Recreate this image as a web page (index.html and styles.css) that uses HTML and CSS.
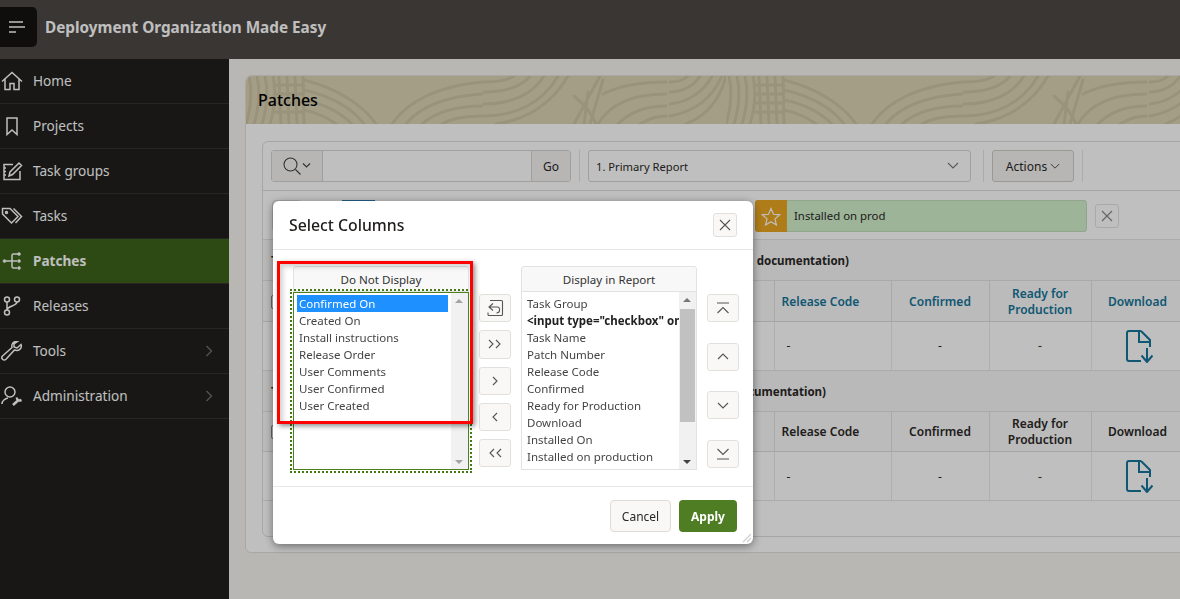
FILE: index.html
```html
<!DOCTYPE html>
<html lang="en">
<head>
	<meta charset="UTF-8">
	<title>Deployment Organization Made Easy</title>
	<link rel="stylesheet" href="styles.css">
</head>
<body>
	<header class="topbar">
		<button class="nav-toggle">
			<svg width="16" height="12" viewBox="0 0 16 12"><path d="M0 1h14M0 6h16M0 11h7" stroke="#fff" stroke-width="1.5"/></svg>
		</button>
		<div class="app-title">Deployment Organization Made Easy</div>
	</header>

	<div class="page">
		<nav class="sidebar">
			<ul>
				<li>
					<svg class="nav-ico" viewBox="0 0 22 20"><path d="M1 10.5L11 1.5l10 9M4 8v10.5h5v-6h4v6h5V8"/></svg>
					Home
				</li>
				<li>
					<svg class="nav-ico" viewBox="0 0 22 20"><path d="M6 2h10v16.5l-5-4.5-5 4.5z"/></svg>
					Projects
				</li>
				<li>
					<svg class="nav-ico" viewBox="0 0 22 20"><path d="M12 3.500H3V18.500H19V10M3 7h2M3 10.500h2M3 14h2M8 15l1-4 9-9 2.500 2.500-9 9z"/></svg>
					Task groups
				</li>
				<li>
					<svg class="nav-ico" viewBox="0 0 22 20"><path d="M1.5 2.500h7.500l8 8-6.500 6.500-9-9zM12.500 2.500l8 8-6 6.500"/><circle cx="5.5" cy="6.5" r="1"/></svg>
					Tasks
				</li>
				<li class="active">
					<svg class="nav-ico" viewBox="0 0 22 20"><path d="M5 10h6M19 3h-6.500a1.500 1.500 0 0 0-1.500 1.500v11a1.500 1.500 0 0 0 1.500 1.500H16M11 10h5"/><circle class="dot" cx="3.5" cy="10" r="1.5"/><circle class="dot" cx="18" cy="3" r="1.5"/><circle class="dot" cx="18" cy="10" r="1.5"/><circle class="dot" cx="18" cy="17" r="1.5"/></svg>
					Patches
				</li>
				<li>
					<svg class="nav-ico" viewBox="0 0 22 20"><circle cx="6" cy="3.5" r="2.5"/><circle cx="16" cy="3.5" r="2.5"/><circle cx="6" cy="16.5" r="2.5"/><path d="M6 6v8M16 6c0 4-10 4-10 8"/></svg>
					Releases
				</li>
				<li>
					<svg class="nav-ico" viewBox="0 0 22 20"><path d="M20 3.500l-4 3.500-3-1V3l3.500-2.500C13 0 10 2.500 11 6.500L1.500 15c-1 1-1 2.200 0 3.200s2.500 1 3.500 0L13.500 9c4 1.500 8-1.500 6.500-5.500z"/></svg>
					Tools
					<svg class="nav-more" viewBox="0 0 8 12"><path d="M1.5 1l5 5-5 5"/></svg>
				</li>
				<li>
					<svg class="nav-ico" viewBox="0 0 22 20"><circle cx="9" cy="6" r="5"/><path d="M1 18c0-3 3-5.500 6-6"/><path class="heavy" d="M12 19l5.500-5M16 11.500c-.5 2 1 4 4.500 2.500"/></svg>
					Administration
					<svg class="nav-more" viewBox="0 0 8 12"><path d="M1.5 1l5 5-5 5"/></svg>
				</li>
			</ul>
		</nav>

		<main class="content">
			<section class="card">
				<div class="card-head">
					<svg class="wood" width="100%" height="48">
						<defs>
							<pattern id="woodTile" width="480" height="48" patternUnits="userSpaceOnUse">
								<g fill="none" stroke="#cdc4a6" stroke-width="3" stroke-linecap="round">
									<path d="M3 0c3 14 2 32-3 48M11 0c3 14 2 32-3 48M19 0c3 14 2 32-3 48M27 0c3 14 2 32-3 48"/>
									<path d="M33 1l2 47M41 1l2 47M49 1l2 47M57 1l1 47M31 9h27M30 18h28M30 27h28M30 36h28"/>
									<path d="M58 4c32 8 58 24 72 44M58 14c26 6 48 18 60 34M58 24c20 4 36 12 48 24M58 34c14 3 24 8 32 14"/>
									<path d="M146 48c18-26 50-38 90-42M160 48c14-18 42-28 76-30M176 48c14-12 34-18 60-18M196 48c10-6 24-8 40-8"/>
									<path d="M238 6c14 0 24-2 30-6M238 16c18 0 36-4 46-16M238 28c24 0 48-8 60-28M238 40c30 0 58-12 74-40M250 48c30-4 56-20 72-48"/>
									<path d="M328 48l26-48M338 48l4-32M344 48l13-44M328 20c10 8 18 18 22 28"/>
									<path d="M357 18c16-8 38-12 63-12M352 48c12-20 36-30 68-30M372 48c12-12 28-18 48-18M394 48c8-5 16-8 26-8"/>
									<path d="M424 6c8 0 14-2 18-6M424 16c12 0 24-6 30-16M424 28c18-2 34-12 42-28M424 40c24-4 42-18 52-40M440 48c20-8 34-24 40-48"/>
								</g>
							</pattern>
						</defs>
						<rect width="100%" height="48" fill="url(#woodTile)"/>
					</svg>
					<h2>Patches</h2>
				</div>

				<div class="card-body">
					<div class="report">
						<div class="toolbar">
							<div class="search">
								<span class="search-ico">
									<svg width="28" height="18" viewBox="0 0 28 18"><circle cx="7.5" cy="7.5" r="6.5"/><path d="M12.500 12.500l5 5M20 6.500l3.500 3.500 3.500-3.500"/></svg>
								</span>
								<span class="search-field"></span>
								<span class="search-go">Go</span>
							</div>
							<span class="tb-sep"></span>
							<div class="report-select">
								1. Primary Report
								<svg width="12" height="8" viewBox="0 0 12 8"><path d="M1 1l5 5 5-5"/></svg>
							</div>
							<span class="tb-sep wide"></span>
							<div class="actions">
								Actions
								<svg width="10" height="7" viewBox="0 0 12 8"><path d="M1 1l5 5 5-5"/></svg>
							</div>
							<span class="tb-sep"></span>
						</div>

						<div class="filters">
							<span class="chip-plain"></span>
							<span class="chip-blue"></span>
							<div class="highlight">
								<span class="highlight-ico">
									<svg width="20" height="19" viewBox="0 0 20 19"><path d="M10 1.500l2.500 5.800 6.200.5-4.700 4.100 1.400 6.100L10 14.800l-5.400 3.200L6 11.900 1.300 7.800l6.200-.5z"/></svg>
								</span>
								<span class="highlight-text">Installed on prod</span>
							</div>
							<span class="filter-close">
								<svg width="12" height="12" viewBox="0 0 12 12"><path d="M1 1l10 10M11 1L1 11"/></svg>
							</span>
						</div>

						<div class="group-head"><div class="group-title group-first">Task group patches (see the installer documentation)</div></div>
						<table class="grid linked">
							<colgroup><col class="c1"><col class="c2"><col class="c3"><col class="c4"><col class="c5"><col class="c6"><col class="c7"></colgroup>
							<tr>
								<th><span class="check-box"></span></th><th>Task Name</th><th>Patch Number</th>
								<th class="start">Release Code</th><th>Confirmed</th><th>Ready for<br>Production</th><th>Download</th>
							</tr>
							<tr>
								<td></td><td>-</td><td>-</td><td class="start">-</td><td>-</td><td>-</td>
								<td><svg class="dl-ico" width="28" height="33" viewBox="0 0 28 33"><path d="M15 1H3a2 2 0 0 0-2 2v26a2 2 0 0 0 2 2h12M15 1l9 9v7M13 2v10h11M21 18v14M15.500 25.500L21 32l5.500-6.500"/></svg></td>
							</tr>
						</table>

						<div class="group-head"><div class="group-title group-second">Task group patches (see the installer documentation)</div></div>
						<table class="grid">
							<colgroup><col class="c1"><col class="c2"><col class="c3"><col class="c4"><col class="c5"><col class="c6"><col class="c7"></colgroup>
							<tr>
								<th><span class="check-box"></span></th><th>Task Name</th><th>Patch Number</th>
								<th class="start">Release Code</th><th>Confirmed</th><th>Ready for<br>Production</th><th>Download</th>
							</tr>
							<tr>
								<td></td><td>-</td><td>-</td><td class="start">-</td><td>-</td><td>-</td>
								<td><svg class="dl-ico" width="28" height="33" viewBox="0 0 28 33"><path d="M15 1H3a2 2 0 0 0-2 2v26a2 2 0 0 0 2 2h12M15 1l9 9v7M13 2v10h11M21 18v14M15.500 25.500L21 32l5.500-6.500"/></svg></td>
							</tr>
						</table>
					</div>
				</div>
			</section>
		</main>
	</div>

	<div class="overlay"></div>

	<div class="dialog">
		<div class="dialog-head">
			<h3>Select Columns</h3>
			<button class="icon-btn close-btn">
				<svg width="12" height="12" viewBox="0 0 12 12"><path d="M1 1l10 10M11 1L1 11"/></svg>
			</button>
		</div>

		<div class="shuttle">
			<div class="shuttle-col">
				<div class="shuttle-label">Do Not Display</div>
				<div class="shuttle-list focused">
					<ul>
						<li class="selected">Confirmed On</li>
						<li>Created On</li>
						<li>Install instructions</li>
						<li>Release Order</li>
						<li>User Comments</li>
						<li>User Confirmed</li>
						<li>User Created</li>
					</ul>
					<div class="scroll">
						<span class="arrow-up"></span>
						<span class="arrow-down"></span>
					</div>
				</div>
			</div>

			<div class="shuttle-btns">
				<button class="icon-btn">
					<svg width="18" height="18" viewBox="0 0 18 18"><path d="M4 1.500h11.500a1 1 0 0 1 1 1v13a1 1 0 0 1-1 1H3a1 1 0 0 1-1-1v-2M7 4.500L3 8l4 3.500M3 8h8.500c3 0 3 6-1 6"/></svg>
				</button>
				<button class="icon-btn"><svg width="14" height="10" viewBox="0 0 14 10"><path d="M1 1l4 4-4 4M8 1l4 4-4 4"/></svg></button>
				<button class="icon-btn"><svg width="7" height="10" viewBox="0 0 7 10"><path d="M1 1l4 4-4 4"/></svg></button>
				<button class="icon-btn"><svg width="7" height="10" viewBox="0 0 7 10"><path d="M5 1L1 5l4 4"/></svg></button>
				<button class="icon-btn"><svg width="14" height="10" viewBox="0 0 14 10"><path d="M6 1L2 5l4 4M13 1L9 5l4 4"/></svg></button>
			</div>

			<div class="shuttle-col">
				<div class="shuttle-label">Display in Report</div>
				<div class="shuttle-list">
					<ul>
						<li>Task Group</li>
						<li class="strong">&lt;input type="checkbox" onclick="toggle(this)"&gt;</li>
						<li>Task Name</li>
						<li>Patch Number</li>
						<li>Release Code</li>
						<li>Confirmed</li>
						<li>Ready for Production</li>
						<li>Download</li>
						<li>Installed On</li>
						<li>Installed on production</li>
						<li>Currently Works On Prod</li>
					</ul>
					<div class="scroll dark">
						<span class="arrow-up"></span>
						<span class="thumb"></span>
						<span class="arrow-down"></span>
					</div>
				</div>
			</div>

			<div class="order-btns">
				<button class="icon-btn"><svg width="14" height="13" viewBox="0 0 14 13"><path d="M1 1h12M1.500 11L7 5.500l5.500 5.500"/></svg></button>
				<button class="icon-btn"><svg width="12" height="7" viewBox="0 0 12 7"><path d="M1 6l5-5 5 5"/></svg></button>
				<button class="icon-btn"><svg width="12" height="7" viewBox="0 0 12 7"><path d="M1 1l5 5 5-5"/></svg></button>
				<button class="icon-btn"><svg width="14" height="13" viewBox="0 0 14 13"><path d="M1 12h12M1.500 2L7 7.500 12.500 2"/></svg></button>
			</div>
		</div>

		<div class="dialog-foot">
			<button class="btn">Cancel</button>
			<button class="btn btn-apply">Apply</button>
		</div>
		<svg class="resize" width="10" height="10" viewBox="0 0 10 10"><path d="M1 9l8-8M5 9l4-4"/></svg>
	</div>

	<!-- red box from the screenshot -->
	<div class="mark"></div>
</body>
</html>
```
FILE: styles.css
```css
*{box-sizing:border-box;}
html,body{height:100%;}
body{margin:0;overflow:hidden;background:#f7f4f0;color:#2a2826;font:13px/17px "Noto Sans","Open Sans",sans-serif;}
ul{list-style:none;margin:0;padding:0;}
h2,h3{margin:0;font-weight:500;}
button{font:inherit;color:inherit;cursor:pointer;}
svg path,svg circle{fill:none;}

.topbar{display:flex;align-items:center;height:59px;background:#4d4844;}
.nav-toggle{display:flex;align-items:center;width:37px;height:40px;margin:-6px 0 0;padding:0 0 0 9px;border:0;border-radius:0 5px 5px 0;background:#141312;}
.app-title{margin:-5px 0 0 8px;color:#fff;font-size:15.3px;font-weight:700;white-space:nowrap;}

.page{display:flex;height:540px;}
.sidebar{flex:none;width:229px;background:#201f1d;color:#fff;}
.sidebar li{display:flex;align-items:center;height:45px;padding-bottom:1px;border-bottom:1px solid #353331;font-size:13.6px;}
.sidebar li.active{background:#3c631b;font-weight:700;}
.nav-ico{flex:none;width:22px;height:20px;margin:0 10px 0 1px;}
.nav-ico path,.nav-ico circle{stroke:#fff;stroke-width:1.5;}
.nav-ico .dot{fill:#fff;stroke-width:.5;}
.nav-ico .heavy{stroke-width:2.5;}
.nav-more{width:8px;height:12px;margin-left:auto;margin-right:16px;}
.nav-more path{stroke:#6d6b68;stroke-width:1.5;}

.content{flex:1;min-width:0;padding:16px 0 0 16px;overflow:hidden;}
.card{width:960px;height:478px;border:1px solid #e2e0dc;border-radius:6px 0 0 6px;background:#fff;}
.card-head{position:relative;height:48px;border-radius:6px 0 0 0;background:#dcd3b5;overflow:hidden;}
.wood{display:block;}
.card-head h2{position:absolute;left:12px;top:0;color:#000;font-size:16px;line-height:48px;}
.card-body{padding:17px 16px 0;}

.report{width:1000px;height:396px;border:1px solid #dedede;border-radius:6px 0 0 6px;}
.toolbar{display:flex;align-items:center;gap:8px;height:49px;padding-left:8px;border-bottom:1px solid #ddd;}
.search{display:flex;width:300px;height:32px;border:1px solid #d4d4d4;border-radius:3px;}
.search-ico{display:flex;align-items:center;justify-content:center;width:51px;border-right:1px solid #d4d4d4;background:#f5f3f0;}
.search-ico svg *{stroke:#444;stroke-width:1.1;}
.search-field{flex:1;}
.search-go{width:39px;border-left:1px solid #d4d4d4;background:#f5f3f0;font-size:12px;line-height:31px;text-align:center;}
.tb-sep{width:1px;height:32px;background:#e4e4e4;}
.tb-sep.wide{margin-left:4px;}
.report-select{display:flex;align-items:center;justify-content:space-between;width:383px;height:32px;padding:0 11px 0 7px;border:1px solid #d4d4d4;border-radius:3px;font-size:11.2px;}
.report-select svg *,.actions svg *{stroke:#777;stroke-width:1.1;}
.actions svg *{stroke:#444;}
.actions{display:flex;align-items:center;gap:3px;justify-content:center;width:82px;height:32px;border:1px solid #cfcdc9;border-radius:3px;background:#f5f3f0;font-size:12px;}

.filters{display:flex;align-items:center;height:49px;padding:2px 0 0 9px;border-bottom:1px solid #e4e4e4;}
.chip-plain{width:30px;height:32px;border:1px solid #ddd;border-radius:4px;}
.chip-blue{width:33px;height:32px;margin-left:40px;background:#2e7fb8;}
.highlight{display:flex;width:332px;height:32px;margin-left:380px;border:1px solid #c4dcbf;border-radius:3px;background:#d2f0cb;}
.highlight-ico{display:flex;align-items:center;justify-content:center;width:32px;margin:-1px 0 -1px -1px;border-radius:3px 0 0 3px;background:#e8a620;}
.highlight-ico path{stroke:#fff;stroke-width:1.2;}
.highlight-text{padding-left:7px;font-size:11.4px;line-height:29px;}
.filter-close{display:flex;align-items:center;justify-content:center;width:24px;height:24px;margin-left:8px;border:1px solid #e2e2e2;border-radius:3px;}
.filter-close path{stroke:#888;stroke-width:1.2;}

.group-head{height:41px;padding-left:8px;background:#f7f7f7;border-bottom:1px solid #e2e2e2;}
.group-title{font-size:11.5px;font-weight:700;line-height:41px;text-align:justify;text-align-last:justify;}
.group-first{width:578px;}
.group-second{width:555px;}

.grid{width:921px;height:89px;border-collapse:collapse;table-layout:fixed;}
.grid tr:first-child{height:40px;}
.grid tr:last-child{height:49px;}
.grid th{padding:2px 8px 0;border-right:1px solid #e2e2e2;border-bottom:1px solid #ddd;background:#fafafa;font-size:12px;line-height:16px;font-weight:600;text-align:center;}
.grid td{padding:0 8px;border-right:1px solid #eaeaea;border-bottom:1px solid #e4e4e4;background:#fff;font-size:12px;text-align:center;}
.grid th.start{padding-left:7px;text-align:left;}
.grid td.start{padding-left:12px;text-align:left;}
.linked th{color:#157599;}
.c1{width:68px;}
.c2{width:290px;}
.c3{width:153px;}
.c4{width:117px;}
.c5{width:98px;}
.c6{width:102px;}
.c7{width:93px;}
.check-box{display:block;width:14px;height:14px;border:1px solid #888;border-radius:2px;}
.dl-ico{display:block;margin:1px auto 0;position:relative;left:2px;}
.dl-ico path{stroke:#157599;stroke-width:2;}

.overlay{position:fixed;inset:0;background:rgba(0,0,0,.25);}
.dialog{position:fixed;left:273px;top:201px;display:flex;flex-direction:column;width:480px;height:343px;border-radius:6px;background:#fff;box-shadow:0 2px 8px rgba(0,0,0,.45);}
.dialog-head{display:flex;align-items:center;justify-content:space-between;height:49px;padding:0 16px;border-bottom:1px solid #e6e6e6;}
.dialog-head h3{font-size:15.8px;color:#1e1c1a;}
.icon-btn{display:flex;align-items:center;justify-content:center;padding:0;border:1px solid #e2e0dc;border-radius:3px;background:#f9f8f6;}
.icon-btn path{stroke:#555;stroke-width:1.1;}
.close-btn{width:24px;height:24px;}

.shuttle{display:flex;height:237px;padding:16px 0 0 20px;border-bottom:1px solid #e8e8e8;}
.shuttle-col{width:176px;height:204px;}
.shuttle-label{height:26px;border:1px solid #e2e2e2;border-radius:3px 3px 0 0;background:#f8f8f8;font-size:11.6px;line-height:26px;text-align:center;color:#333;}
.shuttle-list{display:flex;height:178px;border:1px solid #e2e2e2;border-top:0;font-size:11.5px;color:#444;overflow:hidden;}
.shuttle-list ul{flex:1;min-width:0;padding:3px 0 0 3px;white-space:nowrap;overflow:hidden;}
.shuttle-list li{height:17px;padding:0 2px;line-height:17px;overflow:hidden;}
.shuttle-list li.selected{background:#1e90ff;color:#fff;}
.shuttle-list li.strong{font-weight:700;color:#222;}
.shuttle-list.focused{border:1px solid #4f8020;outline:2px dotted #447a14;outline-offset:1px;}
.focused ul{padding:2px 3px 0 3px;}
.scroll{position:relative;flex:none;width:17px;background:#f1f1f1;}
.arrow-up,.arrow-down{position:absolute;left:4px;border-left:4px solid transparent;border-right:4px solid transparent;}
.arrow-up{top:6px;border-bottom:4px solid #a3a3a3;}
.arrow-down{bottom:5px;border-top:4px solid #a3a3a3;}
.scroll.dark .arrow-up{border-bottom-color:#777;}
.scroll.dark .arrow-down{border-top-color:#444;}
.thumb{position:absolute;left:1px;right:1px;top:17px;height:113px;background:#c1c1c1;}

.shuttle-btns{display:flex;flex-direction:column;gap:8px;width:32px;margin:28px 10px 0;}
.shuttle-btns .icon-btn{height:28.3px;}
.order-btns{display:flex;flex-direction:column;gap:20.5px;width:32px;margin:28px 0 0 10px;}
.order-btns .icon-btn{height:28px;}

.dialog-foot{display:flex;justify-content:flex-end;gap:8px;padding:13px 16px 0;}
.btn{height:32px;padding:0;width:61px;border:1px solid #dedbd6;border-radius:4px;background:#f9f8f6;font-size:12px;}
.btn-apply{width:58px;border:0;background:#4f7d23;color:#fff;font-weight:700;}
.resize{position:absolute;right:1px;bottom:1px;}
.resize path{stroke:#d0d0d0;stroke-width:1.2;}

.mark{position:fixed;left:277px;top:261px;width:196px;height:163px;border:3px solid #f00;box-shadow:2px 2px 5px rgba(0,0,0,.45),inset 3px 3px 5px rgba(0,0,0,.18);}
```
